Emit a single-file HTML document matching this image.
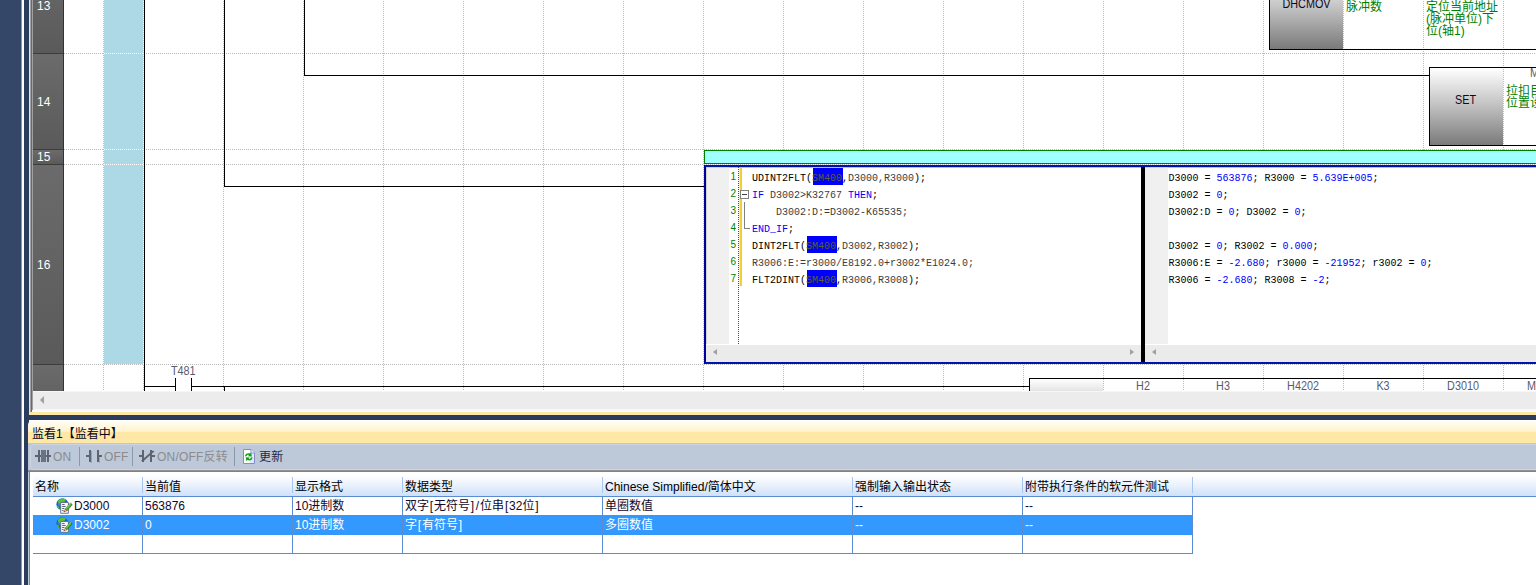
<!DOCTYPE html>
<html lang="zh-CN">
<head>
<meta charset="utf-8">
<title>监看1【监看中】</title>
<style>
*{box-sizing:border-box;margin:0;padding:0}
html,body{width:1536px;height:585px;overflow:hidden;background:#fff}
body{position:relative;font-family:"Liberation Sans","Noto Sans CJK SC",sans-serif;font-size:12px;color:#000}
.a,#root div,#root svg{position:absolute}
.rh span,.tbt{position:absolute}
.hw{display:inline-block;width:5px;text-align:center}
#root{position:absolute;left:0;top:0;width:1536px;height:585px;overflow:hidden;background:#fff}
.rh{left:33px;width:31px;background:linear-gradient(#6b6b6b,#5a5a5a);border-top:1px solid #3c3c3c;border-right:1px solid #333;color:#fff;font-size:12px;line-height:12px}
.rh span{left:4px}
.vd{width:1px;top:-1px;height:392px;background:repeating-linear-gradient(#b9b9b9 0 1px,rgba(255,255,255,0) 1px 2px)}
.hd{height:1px;left:64px;width:1472px;background:repeating-linear-gradient(90deg,#b9b9b9 0 1px,rgba(255,255,255,0) 1px 2px)}
.wd{background:repeating-linear-gradient(#fff 0 1px,rgba(255,255,255,0) 1px 2px)}
.wh{background:repeating-linear-gradient(90deg,#fff 0 1px,rgba(255,255,255,0) 1px 2px)}
.k{background:#000}
.grn{color:#008000;font-size:12px;line-height:12px;white-space:nowrap}
.dev{color:#5a5a6e;font-size:12px;line-height:12px;white-space:nowrap;transform:scaleX(.9);transform-origin:0 0}
.ins{color:#0c0828;font-size:12px;line-height:12px;white-space:nowrap;text-align:center;transform:scaleX(.9)}
.ib{background:linear-gradient(#ffffff,#c6c6c6 45%,#7a7a7a);border-left:1px solid #000}
.code{font-family:"Liberation Mono",monospace;font-size:10px;line-height:17px;white-space:pre;color:#000}
.code b{font-weight:normal;color:#0000ff}
.code u{text-decoration:none;color:#3c3c3c}
.code s{text-decoration:none;color:#5e5a3c}
.ln{font-family:"Liberation Sans",sans-serif;font-size:10px;line-height:17px;color:#008000;text-align:right;white-space:pre}
.tbt{top:450px;font-size:12px;line-height:15px;color:#8c8c8c;white-space:nowrap;letter-spacing:.2px}
.sep{top:447px;width:1px;height:19px;background:#8e97a6}
.th{top:477px;height:20px;font-size:12px;line-height:21px;white-space:nowrap}
.td{height:18px;font-size:12px;line-height:18px;white-space:nowrap}
.vl{width:1px;background:#5b8bd0}
.hl{height:1px;background:#5b8bd0}
</style>
</head>
<body>
<div id="root">
<!-- ladder view -->
<div id="lad" style="left:0;top:0;width:1536px;height:391px;overflow:hidden;background:#fff">
<div style="left:104px;top:0;width:40px;height:364px;background:#add8e6"></div>
<div class="vd" style="left:103px"></div><div class="vd" style="left:143px"></div><div class="vd" style="left:223px"></div><div class="vd" style="left:303px"></div><div class="vd" style="left:383px"></div><div class="vd" style="left:463px"></div><div class="vd" style="left:543px"></div><div class="vd" style="left:623px"></div><div class="vd" style="left:703px"></div><div class="vd" style="left:783px"></div><div class="vd" style="left:863px"></div><div class="vd" style="left:943px"></div><div class="vd" style="left:1023px"></div><div class="vd" style="left:1103px"></div><div class="vd" style="left:1183px"></div><div class="vd" style="left:1263px"></div><div class="vd" style="left:1343px"></div><div class="vd" style="left:1423px"></div><div class="vd" style="left:1503px"></div>
<div class="hd" style="top:53px"></div><div class="hd" style="top:149px"></div><div class="hd" style="top:164px"></div><div class="hd" style="top:364px"></div>
<div class="wd" style="left:143px;top:-1px;width:1px;height:365px"></div><div class="wh" style="left:104px;top:53px;width:40px;height:1px"></div><div class="wh" style="left:104px;top:149px;width:40px;height:1px"></div><div class="wh" style="left:104px;top:164px;width:40px;height:1px"></div>
<div class="k" style="left:144px;top:0px;width:1px;height:391px"></div><div class="k" style="left:224px;top:0px;width:1px;height:187px"></div><div class="k" style="left:304px;top:0px;width:1px;height:76px"></div><div class="k" style="left:304px;top:75px;width:1125px;height:1px"></div><div class="k" style="left:224px;top:186px;width:480px;height:1px"></div><div class="k" style="left:144px;top:386px;width:32px;height:1px"></div><div class="k" style="left:175px;top:378px;width:1px;height:13px"></div><div class="k" style="left:191px;top:378px;width:1px;height:13px"></div><div class="k" style="left:191px;top:386px;width:839px;height:1px"></div><div class="k" style="left:224px;top:386px;width:1px;height:5px"></div><div class="k" style="left:1029px;top:378px;width:1px;height:13px"></div><div class="k" style="left:1029px;top:378px;width:507px;height:1px"></div>
<div class="dev" style="left:171px;top:365px;">T481</div>
<div style="left:1030px;top:379px;width:73px;height:12px;background:linear-gradient(#fff,#e4e4e4)"></div>
<div class="dev" style="left:1103px;top:380px;width:80px;text-align:center;transform-origin:50% 0">H2</div><div class="dev" style="left:1183px;top:380px;width:80px;text-align:center;transform-origin:50% 0">H3</div><div class="dev" style="left:1263px;top:380px;width:80px;text-align:center;transform-origin:50% 0">H4202</div><div class="dev" style="left:1343px;top:380px;width:80px;text-align:center;transform-origin:50% 0">K3</div><div class="dev" style="left:1423px;top:380px;width:80px;text-align:center;transform-origin:50% 0">D3010</div><div class="dev" style="left:1527px;top:380px">M8</div>
<div class="ib" style="left:1269px;top:-30px;width:74px;height:79px"></div><div class="ins" style="left:1270px;top:-2px;width:73px">DHCMOV</div><div class="k" style="left:1269px;top:49px;width:267px;height:1px"></div><div class="grn" style="left:1346px;top:1px">脉冲数</div><div class="grn" style="left:1426px;top:1px">定位当前地址<br>(脉冲单位)下<br>位(轴1)</div>
<div class="ib" style="left:1429px;top:68px;width:74px;height:77px"></div><div class="k" style="left:1429px;top:67px;width:107px;height:1px"></div><div class="k" style="left:1429px;top:145px;width:107px;height:1px"></div><div class="ins" style="left:1429px;top:94px;width:73px">SET</div><div class="dev" style="left:1530px;top:67px">M600</div><div class="grn" style="left:1506px;top:85px">拉扣目标<br>位置设定</div>
<div style="left:704px;top:150px;width:840px;height:14px;background:#a0ffff;border:1px solid #008000"></div>
<!-- ST editor -->
<div id="st" style="left:704px;top:165px;width:840px;height:199px;border:2px solid #0012b0;border-left-color:#00009c;background:#fff;overflow:hidden">
<div style="left:-2px;top:-2px;width:80px;height:2px;background:#00009c"></div><div style="left:0;top:0;width:840px;height:1px;background:#c2beb2"></div><div style="left:0;top:0;width:23px;height:177px;background:#f0f0f0;border-top:1px solid #d4d2c8;border-left:1px solid #d4d2c8"></div><div style="left:32px;top:0;width:1px;height:178px;background:repeating-linear-gradient(#008000 0 1px,#fff 1px 2px)"></div><div style="left:33px;top:1px;width:1px;height:118px;background:rgba(240,208,48,.35)"></div><div style="left:34px;top:1px;width:2px;height:118px;background:#f0d030"></div>
<div class="ln" style="left:17px;top:1px;width:13px">1
2
3
4
5
6
7</div>
<div style="left:107px;top:1px;width:30px;height:17px;background:#0000ff"></div><div style="left:101px;top:69px;width:30px;height:17px;background:#0000ff"></div><div style="left:101px;top:103px;width:30px;height:17px;background:#0000ff"></div><div class="code" style="left:46px;top:3px">UDINT2FLT(<s>SM400</s>,<u>D3000,R3000</u>);
<b>IF</b> <u>D3002&gt;K32767</u> <b>THEN</b>;
    <u>D3002:D:=D3002-K65535;</u>
<b>END_IF</b>;
DINT2FLT(<s>SM400</s>,<u>D3002,R3002</u>);
<u>R3006:E:=r3000/E8192.0+r3002*E1024.0;</u>
FLT2DINT(<s>SM400</s>,<u>R3006,R3008</u>);</div>
<div style="left:34px;top:23px;width:9px;height:9px;border:1px solid #808080;background:#fff"></div><div style="left:36px;top:27px;width:5px;height:1px;background:#404040"></div><div style="left:38px;top:35px;width:1px;height:27px;background:#808080"></div><div style="left:38px;top:61px;width:6px;height:1px;background:#808080"></div>
<div style="left:0;top:178px;width:435px;height:17px;background:#ebebeb"></div><div style="left:7px;top:182px;width:0;height:0;border:3.5px solid transparent;border-left:0;border-right:4px solid #a0a0a0"></div><div style="left:424px;top:182px;width:0;height:0;border:3.5px solid transparent;border-right:0;border-left:4px solid #a0a0a0"></div>
<div class="k" style="left:435px;top:0;width:4px;height:195px"></div>
<div style="left:439px;top:0;width:23px;height:177px;background:#f0f0f0;border-top:1px solid #d4d2c8"></div><div style="left:439px;top:178px;width:400px;height:17px;background:#ebebeb"></div><div style="left:446px;top:182px;width:0;height:0;border:3.5px solid transparent;border-left:0;border-right:4px solid #a0a0a0"></div>
<div class="code" style="left:462.5px;top:3px">D3000 = <b>563876</b>; R3000 = <b>5.639E+005</b>;
D3002 = <b>0</b>;
D3002:D = <b>0</b>; D3002 = <b>0</b>;

D3002 = <b>0</b>; R3002 = <b>0.000</b>;
R3006:E = <b>-2.680</b>; r3000 = <b>-21952</b>; r3002 = <b>0</b>;
R3006 = <b>-2.680</b>; R3008 = <b>-2</b>;</div>
</div>
<div class="rh" style="top:-44px;height:97px"><span style="top:43px">13</span></div><div class="rh" style="top:53px;height:96px"><span style="top:42px">14</span></div><div class="rh" style="top:149px;height:15px"><span style="top:1px">15</span></div><div class="rh" style="top:164px;height:200px"><span style="top:94px">16</span></div><div class="rh" style="top:364px;height:60px"></div>
</div>
<!-- window frame -->
<div style="left:0;top:0;width:21px;height:585px;background:#354769"></div><div style="left:21px;top:0;width:1px;height:585px;background:#6f9ad6"></div><div style="left:22px;top:0;width:2px;height:585px;background:#fff"></div><div style="left:24px;top:0;width:5px;height:585px;background:#2b3d5e"></div><div style="left:29px;top:0;width:1px;height:415px;background:#ffe8a6"></div><div style="left:30px;top:0;width:1px;height:412px;background:#a2a2a2"></div><div style="left:31px;top:0;width:1px;height:412px;background:#6a6a6a"></div><div style="left:32px;top:0;width:1px;height:410px;background:#a0a0a0"></div>
<div style="left:33px;top:391px;width:1503px;height:18px;background:linear-gradient(#f6f6f6 0 1px,#ececec 1px)"></div><div style="left:40px;top:396px;width:0;height:0;border:4px solid transparent;border-left:0;border-right:4px solid #a0a0a0"></div><div style="left:33px;top:409px;width:1503px;height:3px;background:linear-gradient(#f6f6f6,#fff)"></div><div style="left:29px;top:412px;width:1507px;height:3px;background:#ffe8a6"></div><div style="left:24px;top:415px;width:1512px;height:5px;background:#2b3d5e"></div>
<!-- watch window -->
<div style="left:28px;top:420px;width:1508px;height:24px;background:linear-gradient(#fffefb,#fff2cb 48%,#ffe8a6 50%,#ffe8a6);border-top-left-radius:5px"></div><div style="left:32px;top:427px;font-size:12px;line-height:14px;color:#05051a;white-space:nowrap">监看1【监看中】</div>
<div style="left:28px;top:443px;width:1508px;height:142px;background:#bcc7d8"></div><div style="left:30px;top:444px;width:1520px;height:26px;border:1px solid #cbd4e3;border-radius:4px;background:#bdc8d9"></div><div id="tb"><svg style="left:35px;top:449px" width="16" height="14" viewBox="0 0 16 14"><g fill="#5e6470"><rect x="0" y="6" width="16" height="2"/><rect x="3" y="1" width="2" height="12"/><rect x="6" y="1" width="5" height="12" fill="#6c7380"/><rect x="12" y="1" width="2" height="12"/></g></svg><span class="tbt" style="left:53px">ON</span><div class="sep" style="left:79px"></div><svg style="left:86px;top:449px" width="17" height="14" viewBox="0 0 17 14"><g fill="#5e6470"><rect x="0" y="6" width="4" height="2"/><rect x="3" y="1" width="2" height="12"/><rect x="11" y="1" width="2" height="12"/><rect x="12" y="6" width="4" height="2"/><rect x="5" y="2" width="1" height="12" fill="#9aa3b2"/><rect x="13" y="8" width="1" height="6" fill="#9aa3b2"/></g></svg><span class="tbt" style="left:104px">OFF</span><div class="sep" style="left:132px"></div><svg style="left:139px;top:449px" width="17" height="14" viewBox="0 0 17 14"><g fill="#5e6470"><rect x="0" y="6" width="4" height="2"/><rect x="3" y="1" width="2" height="12"/><rect x="11" y="1" width="2" height="12"/><rect x="12" y="6" width="4" height="2"/><path d="M2.2 11.6 L13.8 1.6 L15.4 2.6 L3.6 13 Z"/></g></svg><span class="tbt" style="left:157px">ON/OFF反转</span><div class="sep" style="left:234px"></div><svg style="left:243px;top:449px" width="12" height="15" viewBox="0 0 12 15"><path d="M0.5 0.5 H8 L11.5 4 V14.5 H0.5 Z" fill="#fff" stroke="#8a88c6"/><path d="M7 1 V14 H11 V4.5 L8 1Z" fill="#d6e6ff" opacity=".8"/><path d="M8 0.5 V4 H11.5" fill="#eef2ff" stroke="#8a88c6" stroke-width=".8"/><path d="M2 7.2 C2.2 4.6 5 3.4 7.2 4.6 L8.2 3.4 L8.8 7.4 L4.8 7.2 L6 5.9 C4.8 5.4 3.8 6 3.6 7.2 Z" fill="#12a012"/><path d="M9.6 8.4 C9.4 11 6.6 12.2 4.4 11 L3.4 12.2 L2.8 8.2 L6.8 8.4 L5.6 9.7 C6.8 10.2 7.8 9.6 8 8.4 Z" fill="#12a012"/></svg><span class="tbt" style="left:259px;color:#1e2a4a">更新</span></div>
<div style="left:28px;top:470px;width:1508px;height:2px;background:linear-gradient(#9a9a9a,#7a7a7a)"></div><div style="left:29px;top:471px;width:1px;height:114px;background:#858585"></div><div style="left:30px;top:472px;width:1506px;height:113px;background:#fff"></div>
<div style="left:33px;top:475px;width:1503px;height:21px;background:linear-gradient(#ffffff,#eef4fd 40%,#cfe0f9)"></div><div class="hl" style="left:33px;top:496px;width:1503px"></div><div class="th" style="left:35px">名称</div><div style="left:142px;top:477px;width:1px;height:16px;background:#a6c6f2"></div><div class="th" style="left:145px">当前值</div><div style="left:292px;top:477px;width:1px;height:16px;background:#a6c6f2"></div><div class="th" style="left:295px">显示格式</div><div style="left:402px;top:477px;width:1px;height:16px;background:#a6c6f2"></div><div class="th" style="left:405px">数据类型</div><div style="left:602px;top:477px;width:1px;height:16px;background:#a6c6f2"></div><div class="th" style="left:605px">Chinese Simplified/简体中文</div><div style="left:852px;top:477px;width:1px;height:16px;background:#a6c6f2"></div><div class="th" style="left:855px">强制输入输出状态</div><div style="left:1022px;top:477px;width:1px;height:16px;background:#a6c6f2"></div><div class="th" style="left:1025px">附带执行条件的软元件测试</div><div style="left:1192px;top:477px;width:1px;height:16px;background:#a6c6f2"></div>
<div style="left:33px;top:515px;width:1160px;height:20px;background:#3399ff"></div><div style="left:33px;top:516px;width:1160px;height:1px;background:repeating-linear-gradient(90deg,#c87028 0 1px,rgba(0,0,0,0) 1px 2px)"></div><div style="left:33px;top:533px;width:1160px;height:1px;background:repeating-linear-gradient(90deg,#c87028 0 1px,rgba(0,0,0,0) 1px 2px)"></div><div style="left:33px;top:516px;width:1px;height:18px;background:repeating-linear-gradient(#c87028 0 1px,rgba(0,0,0,0) 1px 2px)"></div><div style="left:1192px;top:516px;width:1px;height:18px;background:repeating-linear-gradient(#c87028 0 1px,rgba(0,0,0,0) 1px 2px)"></div>
<div class="td" style="left:74px;top:497px;color:#12082a">D3000</div><div class="td" style="left:145px;top:497px;color:#12082a">563876</div><div class="td" style="left:295px;top:497px;color:#12082a">10进制数</div><div class="td" style="left:405px;top:497px;color:#12082a">双字<span class="hw">[</span>无符号<span class="hw">]</span><span class="hw">/</span>位串<span class="hw">[</span>32位<span class="hw">]</span></div><div class="td" style="left:605px;top:497px;color:#12082a">单圈数值</div><div class="td" style="left:855px;top:497px;color:#12082a">--</div><div class="td" style="left:1025px;top:497px;color:#12082a">--</div><div class="td" style="left:74px;top:516px;color:#fff">D3002</div><div class="td" style="left:145px;top:516px;color:#fff">0</div><div class="td" style="left:295px;top:516px;color:#fff">10进制数</div><div class="td" style="left:405px;top:516px;color:#fff">字<span class="hw">[</span>有符号<span class="hw">]</span></div><div class="td" style="left:605px;top:516px;color:#fff">多圈数值</div><div class="td" style="left:855px;top:516px;color:#fff">--</div><div class="td" style="left:1025px;top:516px;color:#fff">--</div>
<div class="vl" style="left:142px;top:497px;height:56px"></div><div class="vl" style="left:292px;top:497px;height:56px"></div><div class="vl" style="left:402px;top:497px;height:56px"></div><div class="vl" style="left:602px;top:497px;height:56px"></div><div class="vl" style="left:852px;top:497px;height:56px"></div><div class="vl" style="left:1022px;top:497px;height:56px"></div><div class="vl" style="left:1192px;top:497px;height:56px"></div><div class="hl" style="left:33px;top:553px;width:1160px"></div><div class="hl" style="left:33px;top:534px;width:1160px;opacity:.0"></div>
<svg style="left:56px;top:498px" width="17" height="16" viewBox="0 0 17 16"><circle cx="6.4" cy="6.2" r="6" fill="#1d63c8"/><circle cx="5.4" cy="5" r="3.6" fill="#3f8ee6" opacity=".7"/><path d="M2.2 2.6 Q5 -0.4 9 0.9 Q10.6 2.4 8.4 3.4 Q6.4 3.2 5.8 5 Q4.4 6.4 3 5.4 Q1.6 4.4 2.2 2.6Z" fill="#58c234"/><path d="M0.6 7.4 Q2.4 7.6 3.2 9.4 L3.4 11.2 Q1.2 10 0.6 7.4Z" fill="#58c234"/><path d="M4.7 4.5 H12.4 V15.3 H4.7Z" fill="#f7f8fb" stroke="#5c6c8c" stroke-width=".9"/><path d="M6.2 6.5H8.6M6.2 8.5H9.6M6.2 10.5H8.4M6.2 12.5H7.6" stroke="#5a6066" stroke-width="1"/><path d="M9.2 11.2 L14.4 5 L16.2 6.6 L11 12.8 Z" fill="#4db82c" stroke="#2a5e1c" stroke-width=".7"/><path d="M10.1 10.6 L15.2 4.6" stroke="#a8e890" stroke-width=".7"/><path d="M9.2 11.2 L11 12.8 L7.8 13.9Z" fill="#f0c8a0" stroke="#8a4a20" stroke-width=".5"/><path d="M8.4 13 L8.9 13.6 L7.6 14Z" fill="#402010"/></svg><svg style="left:56px;top:517px" width="17" height="16" viewBox="0 0 17 16"><circle cx="6.4" cy="6.2" r="6" fill="#1d63c8"/><circle cx="5.4" cy="5" r="3.6" fill="#3f8ee6" opacity=".7"/><path d="M2.2 2.6 Q5 -0.4 9 0.9 Q10.6 2.4 8.4 3.4 Q6.4 3.2 5.8 5 Q4.4 6.4 3 5.4 Q1.6 4.4 2.2 2.6Z" fill="#58c234"/><path d="M0.6 7.4 Q2.4 7.6 3.2 9.4 L3.4 11.2 Q1.2 10 0.6 7.4Z" fill="#58c234"/><path d="M4.7 4.5 H12.4 V15.3 H4.7Z" fill="#f7f8fb" stroke="#5c6c8c" stroke-width=".9"/><path d="M6.2 6.5H8.6M6.2 8.5H9.6M6.2 10.5H8.4M6.2 12.5H7.6" stroke="#5a6066" stroke-width="1"/><path d="M9.2 11.2 L14.4 5 L16.2 6.6 L11 12.8 Z" fill="#4db82c" stroke="#2a5e1c" stroke-width=".7"/><path d="M10.1 10.6 L15.2 4.6" stroke="#a8e890" stroke-width=".7"/><path d="M9.2 11.2 L11 12.8 L7.8 13.9Z" fill="#f0c8a0" stroke="#8a4a20" stroke-width=".5"/><path d="M8.4 13 L8.9 13.6 L7.6 14Z" fill="#402010"/></svg>
</div>
</body>
</html>
